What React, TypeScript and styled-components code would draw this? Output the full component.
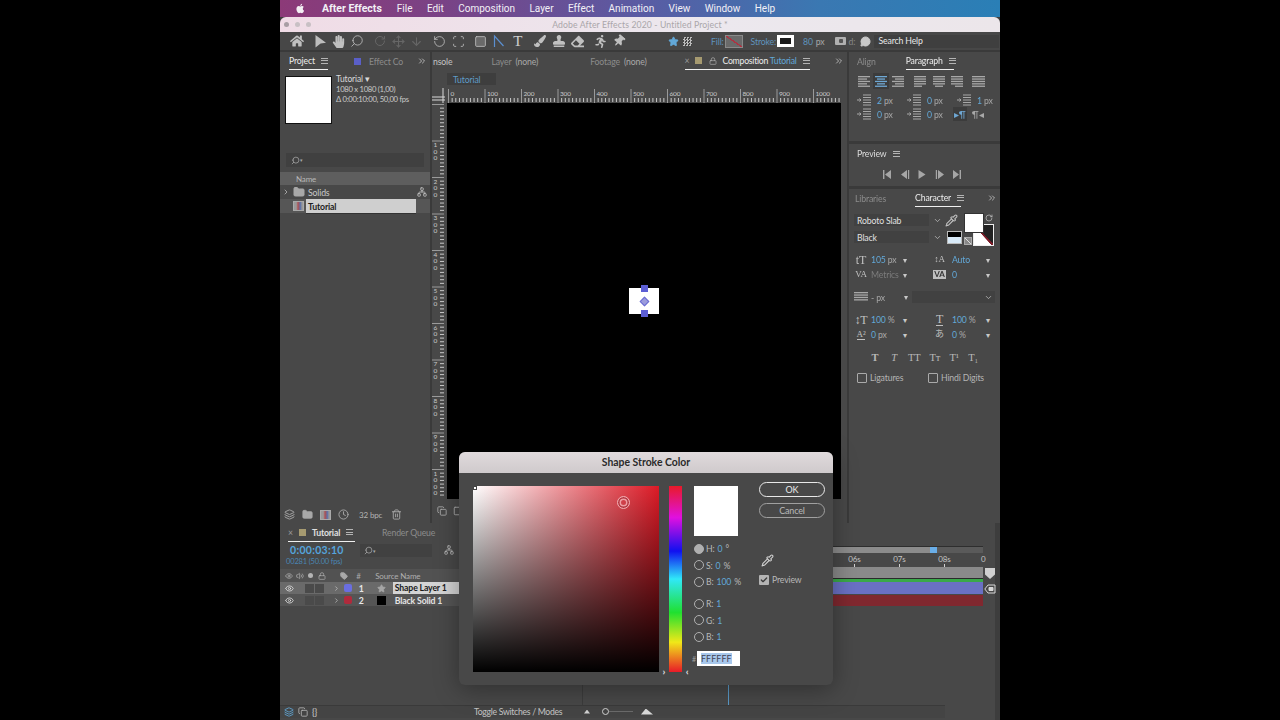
import React from 'react';
import styled, { createGlobalStyle } from 'styled-components';
import {
  Pipette,
  Search,
  Square,
  Star,
  Trash2,
  Folder,
  Eye,
  Lock,
  Tag,
  Volume2,
  Move,
  ArrowDown,
  RotateCcw,
  RotateCw,
  Scan,
  MessageCircle,
  Check,
  ChevronRight,
  ChevronDown,
  ChevronsRight,
  Network,
  Clock,
  Layers,
  Copy,
} from 'lucide-react';
import {
  FaEraser,
  FaHandPaper,
  FaHome,
  FaPaintBrush,
  FaRunning,
  FaStamp,
  FaThumbtack,
} from 'react-icons/fa';

const GlobalStyle = createGlobalStyle`
  html, body { margin: 0; padding: 0; background: #000; height: 100%; }
  * { box-sizing: border-box; }
`;

const BLUE = '#62a8d8';
const TEXT = '#c4c4c4';
const DIM = '#8c8c8c';

const Burger = () => <S.Burger />;

const Caret = () => <S.Caret>▾</S.Caret>;

const Lines = ({ rows }: { rows: [number, number][] }) => (
  <svg width="14" height="12" viewBox="0 0 14 12">
    {rows.map(([x, w], i) => (
      <rect key={i} x={x} y={1 + i * 2.4} width={w} height="1.3" fill="#a8a8a8" />
    ))}
  </svg>
);

const IndentIcon = () => (
  <svg width="14" height="12" viewBox="0 0 14 12">
    <path d="M6 1h8M6 3.5h8M6 6h8M6 8.5h8M6 11h8" stroke="#a8a8a8" strokeWidth="1.1" />
    <path d="M0 6h3.5M2.5 4.5L4 6 2.5 7.5" stroke="#a8a8a8" fill="none" />
  </svg>
);

const Transport = ({ kind }: { kind: string }) => (
  <svg width="10" height="9" viewBox="0 0 10 9" fill="#a6a6a6">
    {kind === 'first' && <path d="M1 0h1.4v9H1zM9 0v9L3 4.5z" />}
    {kind === 'prev' && <path d="M8 0h1.2v9H8zM7 0v9L1 4.5z" />}
    {kind === 'play' && <path d="M1.5 0v9l7-4.5z" />}
    {kind === 'next' && <path d="M.8 0H2v9H.8zM3 0v9l6-4.5z" />}
    {kind === 'last' && <path d="M7.6 0H9v9H7.6zM1 0v9l6-4.5z" />}
  </svg>
);

const TopRuler = () => {
  const ticks = [];
  for (let i = 0; i < 108; i++) {
    const x = 16 + i * 3.65;
    ticks.push(<rect key={i} x={x} y={i % 10 === 0 ? 1 : 10} width="1" height={i % 10 === 0 ? 14 : 4} fill={i % 10 === 0 ? '#9a9a9a' : '#c9c9c9'} />);
  }
  return (
    <svg width="412" height="15" viewBox="0 0 412 15">
      <path d="M0 9h13M0 12h13M11 0v15" stroke="#d8d8d8" strokeWidth="1" />
      {ticks}
      {[0, 100, 200, 300, 400, 500, 600, 700, 800, 900, 1000].map((n, i) => (
        <text key={n} x={18.5 + i * 36.5} y="7.5" fontSize="6.5" fontFamily="Lato" fill="#c8c8c8">
          {n}
        </text>
      ))}
    </svg>
  );
};

const SideRuler = () => {
  const ticks = [];
  for (let i = 0; i < 108; i++) {
    const y = 1 + i * 3.65;
    ticks.push(<rect key={i} x={i % 10 === 0 ? 0 : 8} y={y} width={i % 10 === 0 ? 12 : 4} height="1" fill={i % 10 === 0 ? '#9a9a9a' : '#c9c9c9'} />);
  }
  return (
    <svg width="12" height="396" viewBox="0 0 12 396">
      {ticks}
      {[100, 200, 300, 400, 500, 600, 700, 800, 900, 1000].map((n, i) =>
        String(n)
          .split('')
          .map((d, j) => (
            <text key={`${n}-${j}`} x="1.5" y={44 + i * 36.5 + j * 6.5} fontSize="6.5" fontFamily="Lato" fill="#c8c8c8">
              {d}
            </text>
          ))
      )}
    </svg>
  );
};

const CharCell = ({ icon, value, unit, dim }: { icon: React.ReactNode; value: string; unit?: string; dim?: boolean }) => (
  <S.CharCell>
    <S.CharIcon>{icon}</S.CharIcon>
    <S.CharValue $dim={dim}>
      {value} {unit && <S.Unit>{unit}</S.Unit>}
    </S.CharValue>
    <Caret />
  </S.CharCell>
);

const ColorField = ({ label, value, unit, on }: { label: string; value: string; unit?: string; on?: boolean }) => (
  <S.FieldRow>
    <S.Radio $on={on} />
    <S.FieldLabel>{label}:</S.FieldLabel>
    <S.FieldValue>{value}</S.FieldValue>
    {unit && <S.FieldUnit>{unit}</S.FieldUnit>}
  </S.FieldRow>
);

export default function App() {
  return (
    <S.Page>
      <GlobalStyle />
      <S.Window>
        <S.MenuBar>
          <S.Apple viewBox="0 0 24 24">
            <path d="M17.05 12.54c-.03-2.6 2.12-3.85 2.22-3.91-1.21-1.77-3.09-2.01-3.76-2.04-1.6-.16-3.12.94-3.93.94-.81 0-2.06-.92-3.39-.89-1.74.03-3.35 1.01-4.25 2.57-1.81 3.14-.46 7.8 1.3 10.35.86 1.25 1.89 2.65 3.24 2.6 1.3-.05 1.79-.84 3.36-.84 1.57 0 2.01.84 3.39.81 1.4-.03 2.28-1.27 3.14-2.53.99-1.45 1.4-2.85 1.42-2.93-.03-.01-2.72-1.04-2.74-4.13zM14.47 4.9c.72-.87 1.2-2.08 1.07-3.28-1.03.04-2.28.69-3.02 1.55-.66.77-1.24 2-1.09 3.18 1.15.09 2.32-.58 3.04-1.45z" fill="#f4f0f4" />
          </S.Apple>
          <S.MenuItem $bold>After Effects</S.MenuItem>
          <S.MenuItem>File</S.MenuItem>
          <S.MenuItem>Edit</S.MenuItem>
          <S.MenuItem>Composition</S.MenuItem>
          <S.MenuItem>Layer</S.MenuItem>
          <S.MenuItem>Effect</S.MenuItem>
          <S.MenuItem>Animation</S.MenuItem>
          <S.MenuItem>View</S.MenuItem>
          <S.MenuItem>Window</S.MenuItem>
          <S.MenuItem>Help</S.MenuItem>
        </S.MenuBar>

        <S.TitleBar>
          <S.Lights>
            <S.Light $dark />
            <S.Light />
            <S.Light />
          </S.Lights>
          <S.TitleText>Adobe After Effects 2020 - Untitled Project *</S.TitleText>
        </S.TitleBar>

        <S.ToolBar>
          <S.ToolGroup>
            <S.Tool><FaHome size={14} /></S.Tool>
          </S.ToolGroup>
          <S.ToolGroup>
            <S.Tool>
              <svg width="14" height="14" viewBox="0 0 14 14" fill="#bdbdbd">
                <path d="M2.5 1L13 8.8 7.6 9.4 2.5 13.5z" />
              </svg>
            </S.Tool>
            <S.Tool><FaHandPaper size={13} /></S.Tool>
            <S.Tool><S.MirrorSearch size={14} strokeWidth={1.4} /></S.Tool>
          </S.ToolGroup>
          <S.ToolGroup>
            <S.Tool $off><RotateCw size={12} strokeWidth={2} /></S.Tool>
            <S.Tool $off><Move size={13} strokeWidth={2} /></S.Tool>
            <S.Tool $off><ArrowDown size={13} strokeWidth={2} /></S.Tool>
          </S.ToolGroup>
          <S.ToolGroup>
            <S.Tool><RotateCcw size={13} strokeWidth={1.5} /></S.Tool>
            <S.Tool><Scan size={13} strokeWidth={1.5} /></S.Tool>
          </S.ToolGroup>
          <S.ToolGroup>
            <S.Tool><Square size={13} fill="#6a6a6a" strokeWidth={1.5} /></S.Tool>
            <S.Tool $blue>
              <svg width="14" height="14" viewBox="0 0 14 14" fill="none" stroke="#5b8fd0" strokeWidth="1.2">
                <path d="M2.5 13V2l9 10" />
              </svg>
            </S.Tool>
            <S.Tool><S.TypeGlyph>T</S.TypeGlyph></S.Tool>
          </S.ToolGroup>
          <S.ToolGroup>
            <S.Tool><FaPaintBrush size={12} /></S.Tool>
            <S.Tool><FaStamp size={12} /></S.Tool>
            <S.Tool><FaEraser size={13} /></S.Tool>
          </S.ToolGroup>
          <S.ToolGroup>
            <S.Tool><FaRunning size={13} /></S.Tool>
            <S.Tool><S.TiltPin><FaThumbtack size={12} /></S.TiltPin></S.Tool>
          </S.ToolGroup>

          <S.ToolOptions>
            <Star size={11} fill={BLUE} color={BLUE} />
            <S.SnapBox />
            <S.OptLabel $ml={19}>Fill:</S.OptLabel>
            <S.FillSwatch />
            <S.OptLabel $ml={8}>Stroke:</S.OptLabel>
            <S.StrokeSwatch />
            <S.OptValue>80</S.OptValue>
            <S.OptUnit>px</S.OptUnit>
            <S.AddChip />
            <S.AddLabel>d:</S.AddLabel>
            <MessageCircle size={11} fill="#c8c8c8" color="#c8c8c8" />
            <S.HelpField>Search Help</S.HelpField>
          </S.ToolOptions>
        </S.ToolBar>

        <S.Workspace>
          <S.ProjectPanel>
            <S.TabRow>
              <S.Tab $active $ml={9} $w={39}>Project <Burger /></S.Tab>
              <S.Swatch $color="#5a5fc8" $ml={26} />
              <S.Tab $dim $ml={8}>Effect Co</S.Tab>
              <S.More><ChevronsRight size={10} /></S.More>
            </S.TabRow>
            <S.ProjectInfo>
              <S.Thumb />
              <S.InfoText>
                <S.InfoTitle>Tutorial ▾</S.InfoTitle>
                <span>1080 x 1080 (1,00)</span>
                <span>Δ 0:00:10:00, 50,00 fps</span>
              </S.InfoText>
            </S.ProjectInfo>
            <S.SearchField>
              <S.MirrorSearch size={9} color="#a8a8a8" />
              <S.TinyCaret>▾</S.TinyCaret>
            </S.SearchField>
            <S.NameHeader>Name</S.NameHeader>
            <S.ProjectRow>
              <ChevronRight size={8} color="#cfcfcf" />
              <Folder size={12} fill="#a8a8a8" color="#a8a8a8" />
              <S.ProjectName>Solids</S.ProjectName>
              <S.FlowIcon><Network size={10} color="#c0c0c0" /></S.FlowIcon>
            </S.ProjectRow>
            <S.ProjectRow $sel>
              <S.RowSpacer />
              <S.CompIcon />
              <S.SelectedName>Tutorial</S.SelectedName>
            </S.ProjectRow>
            <S.PanelFooter>
              <Layers size={11} />
              <Folder size={11} fill="#a8a8a8" />
              <S.CompIcon />
              <Clock size={11} />
              <S.Bpc>32 bpc</S.Bpc>
              <Trash2 size={11} />
            </S.PanelFooter>
          </S.ProjectPanel>

          <S.CompPanel>
            <S.TabRow>
              <S.Tab $ml={1}>nsole</S.Tab>
              <S.Tab $dim $ml={39}>Layer <S.Normal>(none)</S.Normal></S.Tab>
              <S.Tab $dim $ml={52}>Footage <S.Normal>(none)</S.Normal></S.Tab>
              <S.Tab $active $ml={38} $w={125}>
                <S.Close>×</S.Close>
                <S.Swatch $color="#a69a70" />
                <S.LockSlot><Lock size={8} /></S.LockSlot>
                <S.CompTitle>Composition <S.BlueText>Tutorial</S.BlueText></S.CompTitle>
                <Burger />
              </S.Tab>
              <S.More><ChevronsRight size={10} /></S.More>
            </S.TabRow>
            <S.SubTabs>
              <S.SubTab>Tutorial</S.SubTab>
            </S.SubTabs>
            <S.RulerTop>
              <TopRuler />
            </S.RulerTop>
            <S.ViewerRow>
              <S.RulerSide>
                <SideRuler />
              </S.RulerSide>
              <S.Canvas>
                <S.ShapeLayer>
                  <S.Handle $pos="top" />
                  <S.Anchor />
                  <S.Handle $pos="bottom" />
                </S.ShapeLayer>
              </S.Canvas>
            </S.ViewerRow>
            <S.ViewerFooter>
              <Copy size={10} />
              <Square size={10} />
            </S.ViewerFooter>
          </S.CompPanel>

          <S.SideColumn>
            <S.ParagraphPanel>
              <S.TabRow>
                <S.Tab $dim $ml={8}>Align</S.Tab>
                <S.Tab $active $ml={30} $w={48}>Paragraph <Burger /></S.Tab>
              </S.TabRow>
              <S.AlignRow>
                <S.AlignBtn><Lines rows={[[0, 12], [0, 9], [0, 12], [0, 9], [0, 12]]} /></S.AlignBtn>
                <S.AlignBtn $on><Lines rows={[[1, 12], [3, 8], [1, 12], [3, 8], [1, 12]]} /></S.AlignBtn>
                <S.AlignBtn><Lines rows={[[2, 12], [5, 9], [2, 12], [5, 9], [2, 12]]} /></S.AlignBtn>
                <S.AlignGap $w={6} />
                <S.AlignBtn $w={18.5}><Lines rows={[[1, 12], [1, 12], [1, 12], [1, 12], [1, 8]]} /></S.AlignBtn>
                <S.AlignBtn $w={18.5}><Lines rows={[[1, 12], [1, 12], [1, 12], [1, 12], [3, 8]]} /></S.AlignBtn>
                <S.AlignBtn $w={18.5}><Lines rows={[[1, 12], [1, 12], [1, 12], [1, 12], [5, 8]]} /></S.AlignBtn>
                <S.AlignGap $w={3} />
                <S.AlignBtn><Lines rows={[[1, 13], [1, 13], [1, 13], [1, 13], [1, 13]]} /></S.AlignBtn>
              </S.AlignRow>
              <S.IndentGrid>
                <S.Indent><IndentIcon /><S.CharValue>2 <S.Unit>px</S.Unit></S.CharValue></S.Indent>
                <S.Indent><IndentIcon /><S.CharValue>0 <S.Unit>px</S.Unit></S.CharValue></S.Indent>
                <S.Indent><IndentIcon /><S.CharValue>1 <S.Unit>px</S.Unit></S.CharValue></S.Indent>
                <S.Indent><IndentIcon /><S.CharValue>0 <S.Unit>px</S.Unit></S.CharValue></S.Indent>
                <S.Indent><IndentIcon /><S.CharValue>0 <S.Unit>px</S.Unit></S.CharValue></S.Indent>
                <S.DirPair>
                  <S.DirBtn $on>▸¶</S.DirBtn>
                  <S.DirBtn>¶◂</S.DirBtn>
                </S.DirPair>
              </S.IndentGrid>
            </S.ParagraphPanel>

            <S.PreviewPanel>
              <S.PanelTitle>Preview <Burger /></S.PanelTitle>
              <S.TransportRow>
                <Transport kind="first" />
                <Transport kind="prev" />
                <Transport kind="play" />
                <Transport kind="next" />
                <Transport kind="last" />
              </S.TransportRow>
            </S.PreviewPanel>

            <S.CharacterPanel>
              <S.TabRow>
                <S.Tab $dim $ml={6}>Libraries</S.Tab>
                <S.Tab $active $ml={29} $w={46}>Character <Burger /></S.Tab>
                <S.More><ChevronsRight size={10} /></S.More>
              </S.TabRow>
              <S.FontBlock>
                <S.FontFields>
                  <S.FontRow>
                    <S.FontField>Roboto Slab</S.FontField>
                    <ChevronDown size={9} color="#c0c0c0" />
                    <Pipette size={13} color="#c0c0c0" />
                  </S.FontRow>
                  <S.FontRow>
                    <S.FontField>Black</S.FontField>
                    <ChevronDown size={9} color="#c0c0c0" />
                    <S.MiniSwatch />
                  </S.FontRow>
                </S.FontFields>
                <S.ColorStack>
                  <S.BackColor />
                  <S.FrontColor />
                  <S.SwapArrow><RotateCw size={8} color="#c8c8c8" /></S.SwapArrow>
                  <S.ResetChip />
                </S.ColorStack>
              </S.FontBlock>
              <S.CharGrid $mt={6}>
                <CharCell icon={<S.TGlyph>tT</S.TGlyph>} value="105" unit="px" />
                <CharCell icon={<S.TGlyph $small>↕A</S.TGlyph>} value="Auto" />
                <CharCell icon={<S.TGlyph $small>VA</S.TGlyph>} value="Metrics" dim />
                <CharCell icon={<S.KernGlyph>VA</S.KernGlyph>} value="0" />
              </S.CharGrid>
              <S.StrokeRow>
                <S.StrokeIcon><Lines rows={[[0, 14], [0, 14], [0, 14], [0, 14]]} /></S.StrokeIcon>
                <S.CharValue><S.Unit>- px</S.Unit></S.CharValue>
                <Caret />
                <S.StrokeSelect><ChevronDown size={9} color="#c0c0c0" /></S.StrokeSelect>
              </S.StrokeRow>
              <S.CharGrid $mt={8}>
                <CharCell icon={<S.TGlyph>↕T</S.TGlyph>} value="100" unit="%" />
                <CharCell icon={<S.TGlyph $under>T</S.TGlyph>} value="100" unit="%" />
                <CharCell icon={<S.TGlyph $small $under>A²</S.TGlyph>} value="0" unit="px" />
                <CharCell icon={<S.TGlyph $small>あ</S.TGlyph>} value="0" unit="%" />
              </S.CharGrid>
              <S.StyleRow>
                <S.StyleGlyph $bold>T</S.StyleGlyph>
                <S.StyleGlyph $italic>T</S.StyleGlyph>
                <S.StyleGlyph>TT</S.StyleGlyph>
                <S.StyleGlyph>Tт</S.StyleGlyph>
                <S.StyleGlyph>T¹</S.StyleGlyph>
                <S.StyleGlyph>T₁</S.StyleGlyph>
              </S.StyleRow>
              <S.CheckRow>
                <S.CheckItem><S.CheckBox />Ligatures</S.CheckItem>
                <S.CheckItem><S.CheckBox />Hindi Digits</S.CheckItem>
              </S.CheckRow>
            </S.CharacterPanel>
          </S.SideColumn>
        </S.Workspace>

        <S.Timeline>
          <S.TimelineTabs>
            <S.Tab $active $ml={8} $w={67}>
              <S.Close>×</S.Close>
              <S.Swatch $color="#a69a70" />
              <S.TabStrong>Tutorial</S.TabStrong>
              <Burger />
            </S.Tab>
            <S.Tab $dim $ml={27}>Render Queue</S.Tab>
          </S.TimelineTabs>
          <S.TimelineBody>
            <S.LayerPane>
              <S.TimeRow>
                <S.TimeBlock>
                  <S.TimeCode>0:00:03:10</S.TimeCode>
                  <S.TimeSub>00281 (50.00 fps)</S.TimeSub>
                </S.TimeBlock>
                <S.TimeSearch>
                  <S.MirrorSearch size={9} color="#a8a8a8" />
                  <S.TinyCaret>▾</S.TinyCaret>
                </S.TimeSearch>
                <S.TreeIcon><Network size={10} color="#b8b8b8" /></S.TreeIcon>
              </S.TimeRow>
              <S.LayerHeader>
                <S.SwitchCell><Eye size={8} /></S.SwitchCell>
                <S.SwitchCell><Volume2 size={8} /></S.SwitchCell>
                <S.SwitchCell><S.Dot /></S.SwitchCell>
                <S.SwitchCell><Lock size={8} /></S.SwitchCell>
                <S.HeaderTag><Tag size={8} fill="#a8a8a8" /></S.HeaderTag>
                <S.HeaderNum>#</S.HeaderNum>
                <S.HeaderName>Source Name</S.HeaderName>
              </S.LayerHeader>
              <S.LayerRow $sel>
                <S.SwitchCell><Eye size={9} color="#e4e4e4" /></S.SwitchCell>
                <S.SwitchGap />
                <S.DarkBox />
                <S.DarkBox />
                <S.Twirl><ChevronRight size={7} color="#d8d8d8" /></S.Twirl>
                <S.LabelChip $color="#6a6ee0" />
                <S.LayerNum>1</S.LayerNum>
                <S.SourceIcon><Star size={9} fill="#a6a6a6" color="#a6a6a6" /></S.SourceIcon>
                <S.LayerNameSel>Shape Layer 1</S.LayerNameSel>
              </S.LayerRow>
              <S.LayerRow>
                <S.SwitchCell><Eye size={9} color="#e4e4e4" /></S.SwitchCell>
                <S.SwitchGap />
                <S.DarkBox />
                <S.DarkBox />
                <S.Twirl><ChevronRight size={7} color="#d8d8d8" /></S.Twirl>
                <S.LabelChip $color="#b02a3c" />
                <S.LayerNum>2</S.LayerNum>
                <S.SourceIcon><S.BlackChip /></S.SourceIcon>
                <S.LayerName>Black Solid 1</S.LayerName>
              </S.LayerRow>
            </S.LayerPane>
            <S.TrackPane>
              <S.ScrollRow>
                <S.ScrollBar>
                  <S.ScrollThumb />
                </S.ScrollBar>
              </S.ScrollRow>
              <S.TimeLabels>
                <S.TimeLabel>06s</S.TimeLabel>
                <S.TimeLabel>07s</S.TimeLabel>
                <S.TimeLabel>08s</S.TimeLabel>
                <S.TimeLabelEdge>0</S.TimeLabelEdge>
              </S.TimeLabels>
              <S.WorkArea />
              <S.GreenLine />
              <S.TrackBar $color="#6a70c4" />
              <S.TrackBar $color="#80282f" />
              <S.Playhead />
            </S.TrackPane>
            <S.SideMarks>
              <S.ShieldMark />
              <svg width="12" height="10" viewBox="0 0 12 10" fill="none" stroke="#d8d8d8">
                <path d="M4 1L.8 5 4 9h7V1z" />
                <path d="M5 3.5h4v3H5z" fill="#d8d8d8" />
              </svg>
            </S.SideMarks>
          </S.TimelineBody>
          <S.TimelineFooter>
            <S.FooterIcons>
              <Layers size={10} color={BLUE} />
              <Copy size={10} />
              <S.Brackets>{'{}'}</S.Brackets>
            </S.FooterIcons>
            <S.ToggleLabel>Toggle Switches / Modes</S.ToggleLabel>
            <S.ZoomSlider>
              <S.SmallPeak />
              <S.SliderKnob />
              <S.SliderLine />
              <S.BigPeak />
            </S.ZoomSlider>
          </S.TimelineFooter>
        </S.Timeline>

        <S.Dialog>
          <S.DialogTitle>Shape Stroke Color</S.DialogTitle>
          <S.DialogBody>
            <S.Picker>
              <S.PickerCorner />
              <S.PickerRing />
            </S.Picker>
            <S.HueColumn>
              <S.HueBar />
              <S.HueArrows>
                <span>›</span>
                <span>‹</span>
              </S.HueArrows>
            </S.HueColumn>
            <S.ValueColumn>
              <S.NewColor />
              <S.FieldGroup $mt={6}>
                <ColorField label="H" value="0" unit="°" on />
                <ColorField label="S" value="0" unit="%" />
                <ColorField label="B" value="100" unit="%" />
              </S.FieldGroup>
              <S.FieldGroup $mt={7}>
                <ColorField label="R" value="1" />
                <ColorField label="G" value="1" />
                <ColorField label="B" value="1" />
              </S.FieldGroup>
              <S.HexRow>
                <S.Hash>#</S.Hash>
                <S.HexInput>
                  <S.HexSel>FFFFFF</S.HexSel>
                </S.HexInput>
              </S.HexRow>
            </S.ValueColumn>
            <S.ButtonColumn>
              <S.PrimaryBtn>OK</S.PrimaryBtn>
              <S.SecondaryBtn>Cancel</S.SecondaryBtn>
              <S.DropperSlot>
                <Pipette size={13} color="#d0d0d0" />
              </S.DropperSlot>
              <S.PreviewCheck>
                <S.PreviewBox><Check size={8} color="#3c3c3c" strokeWidth={4} /></S.PreviewBox>
                Preview
              </S.PreviewCheck>
            </S.ButtonColumn>
          </S.DialogBody>
        </S.Dialog>
      </S.Window>
    </S.Page>
  );
}

const S = {
  Page: styled.div`
    width: 1280px;
    height: 720px;
    background: #000;
    display: flex;
    justify-content: center;
    overflow: hidden;
  `,
  Window: styled.div`
    position: relative;
    width: 720px;
    height: 720px;
    display: flex;
    flex-direction: column;
    background: #3d3d3d;
    font-family: 'Lato', 'Liberation Sans', sans-serif;
    font-size: 8.7px;
    letter-spacing: -0.15px;
    color: ${TEXT};
    filter: blur(0.35px);
  `,
  MenuBar: styled.div`
    height: 17px;
    display: flex;
    align-items: center;
    padding-left: 15px;
    background: linear-gradient(90deg, #8c3a78 0%, #7a4285 22%, #5a5ba3 50%, #3a78b2 75%, #2a7fb6 100%);
    font-family: 'Roboto', 'Liberation Sans', sans-serif;
    letter-spacing: 0;
    font-size: 10px;
    color: #f2f0f6;
  `,
  Apple: styled.svg`
    width: 11px;
    height: 11px;
    margin-right: 16px;
  `,
  MenuItem: styled.span<{ $bold?: boolean }>`
    margin-right: ${(p) => (p.$bold ? 15 : 14.4)}px;
    font-size: ${(p) => (p.$bold ? 10.5 : 10)}px;
    font-weight: ${(p) => (p.$bold ? 700 : 400)};
    white-space: nowrap;
  `,
  TitleBar: styled.div`
    position: relative;
    height: 15px;
    display: flex;
    align-items: center;
    justify-content: center;
    background: linear-gradient(90deg, #f0dce6, #ece8ee 60%, #ece6ea);
    border-radius: 6px 6px 0 0;
  `,
  Lights: styled.div`
    position: absolute;
    left: 4px;
    display: flex;
    gap: 6px;
  `,
  Light: styled.i<{ $dark?: boolean }>`
    width: 5px;
    height: 5px;
    border-radius: 50%;
    background: ${(p) => (p.$dark ? '#a89ea4' : '#c8c0c4')};
  `,
  TitleText: styled.span`
    font-size: 8.7px;
    color: #aaa6aa;
    letter-spacing: 0.1px;
  `,
  ToolBar: styled.div`
    height: 19px;
    display: flex;
    align-items: center;
    padding-left: 8px;
    gap: 4px;
    background: #474747;
    border-bottom: 1px solid #3a3a3a;
  `,
  ToolGroup: styled.div`
    display: flex;
  `,
  Tool: styled.div<{ $off?: boolean; $blue?: boolean }>`
    width: 18.6px;
    display: flex;
    justify-content: center;
    align-items: center;
    color: ${(p) => (p.$off ? '#666' : p.$blue ? '#5b8fd0' : '#c0c0c0')};
  `,
  MirrorSearch: styled(Search)`
    transform: scaleX(-1);
    flex: none;
  `,
  TiltPin: styled.span`
    display: flex;
    transform: rotate(40deg);
  `,
  TypeGlyph: styled.span`
    font-family: 'Liberation Serif', serif;
    font-size: 15px;
    line-height: 1;
    color: #d0d0d0;
  `,
  ToolOptions: styled.div`
    margin-left: 36px;
    display: flex;
    align-items: center;
    flex: 1;
    min-width: 0;
  `,
  SnapBox: styled.div`
    width: 9px;
    height: 9px;
    margin-left: 4px;
    background: repeating-conic-gradient(#bbb 0 25%, #444 0 50%) 0 0 / 3px 3px;
  `,
  OptLabel: styled.span<{ $ml: number }>`
    margin-left: ${(p) => p.$ml}px;
    color: #5f93bd;
  `,
  FillSwatch: styled.div`
    width: 18px;
    height: 13px;
    margin-left: 1px;
    border: 1px solid #8a8a8a;
    background: linear-gradient(to top right, #6a6a6a 46%, #b03040 47%, #b03040 53%, #6a6a6a 54%);
  `,
  StrokeSwatch: styled.div`
    width: 17px;
    height: 12px;
    margin-left: 1px;
    border: 3px solid #fff;
    background: #1a1a1a;
  `,
  OptValue: styled.span`
    margin-left: 9px;
    color: #5f93bd;
  `,
  OptUnit: styled.span`
    margin-left: 3px;
    color: #a8a8a8;
  `,
  AddChip: styled.i`
    width: 11px;
    height: 8px;
    margin-left: 10px;
    flex: none;
    border-radius: 1px;
    background: radial-gradient(circle at 55% 50%, #555 0 2px, #b0b0b0 2.5px);
  `,
  AddLabel: styled.span`
    width: 11px;
    margin-left: 3px;
    flex: none;
    color: #888;
  `,
  HelpField: styled.div`
    margin-left: 3px;
    width: 125px;
    flex: none;
    height: 13px;
    padding: 0 0 1px 5px;
    display: flex;
    align-items: center;
    background: #3f3f3f;
    color: #e8e8e8;
  `,
  Workspace: styled.div`
    height: 472px;
    display: grid;
    grid-template-columns: 150px 415px 151px;
    gap: 0 2px;
    padding-top: 1px;
    background: #3a3a3a;
  `,
  ProjectPanel: styled.section`
    position: relative;
    display: flex;
    flex-direction: column;
    background: #484848;
  `,
  TabRow: styled.div`
    position: relative;
    height: 18px;
    flex: none;
    display: flex;
    align-items: center;
  `,
  Tab: styled.div<{ $active?: boolean; $dim?: boolean; $ml?: number; $w?: number }>`
    height: 18px;
    margin-left: ${(p) => p.$ml ?? 0}px;
    width: ${(p) => (p.$w ? `${p.$w}px` : 'auto')};
    display: flex;
    align-items: center;
    gap: 4px;
    white-space: nowrap;
    color: ${(p) => (p.$active ? '#ececec' : p.$dim ? DIM : TEXT)};
    border-bottom: ${(p) => (p.$active ? '1.5px solid #f0f0f0' : 'none')};
    svg { color: #b0b0b0; flex: none; }
  `,
  Normal: styled.span`
    color: #a8a8a8;
  `,
  Burger: styled.i`
    width: 7px;
    height: 6px;
    flex: none;
    margin-left: 2px;
    border-top: 1px solid #b4b4b4;
    border-bottom: 1px solid #b4b4b4;
    background: linear-gradient(#b4b4b4, #b4b4b4) center / 100% 1px no-repeat;
    display: inline-block;
  `,
  Swatch: styled.i<{ $color: string; $ml?: number }>`
    width: 7px;
    height: 7px;
    flex: none;
    margin-left: ${(p) => p.$ml ?? 0}px;
    background: ${(p) => p.$color};
  `,
  More: styled.div`
    position: absolute;
    right: 3px;
    top: 4px;
    color: #c4c4c4;
  `,
  Close: styled.span`
    color: #9a9a9a;
    margin-right: 2px;
  `,
  LockSlot: styled.span`
    display: flex;
    margin-left: 3px;
  `,
  CompTitle: styled.span`
    margin-left: 1px;
    letter-spacing: -0.25px;
    color: #ececec;
  `,
  BlueText: styled.span`
    color: ${BLUE};
  `,
  ProjectInfo: styled.div`
    margin: 6px 0 0 5px;
    height: 48px;
    display: flex;
    gap: 4px;
  `,
  Thumb: styled.div`
    width: 47px;
    height: 48px;
    background: #fff;
    border: 1px solid #111;
  `,
  InfoText: styled.div`
    display: flex;
    flex-direction: column;
    margin-top: -2px;
    line-height: 10px;
    font-size: 7.7px;
    letter-spacing: -0.3px;
    color: #c8c8c8;
  `,
  InfoTitle: styled.span`
    font-size: 8.5px;
    letter-spacing: -0.15px;
    color: #d8d8d8;
  `,
  SearchField: styled.div`
    margin: 29px 6px 0;
    height: 14px;
    padding-left: 5px;
    display: flex;
    align-items: center;
    background: #404040;
  `,
  TinyCaret: styled.span`
    font-size: 5px;
    color: #a8a8a8;
  `,
  NameHeader: styled.div`
    margin-top: 5px;
    height: 13px;
    padding-left: 16px;
    display: flex;
    align-items: center;
    background: #5e5e5e;
    font-size: 8px;
    color: #b8b8b8;
  `,
  ProjectRow: styled.div<{ $sel?: boolean }>`
    position: relative;
    height: 14px;
    padding-left: 2px;
    display: flex;
    align-items: center;
    gap: 3px;
    background: ${(p) => (p.$sel ? '#565656' : 'transparent')};
  `,
  RowSpacer: styled.i`
    width: 8px;
  `,
  ProjectName: styled.span`
    color: #c8c8c8;
  `,
  FlowIcon: styled.span`
    margin-left: auto;
    margin-right: 3px;
    display: flex;
  `,
  CompIcon: styled.i`
    width: 11px;
    height: 10px;
    flex: none;
    background: linear-gradient(90deg, #999 25%, #b05050 45%, #5a70a8 70%, #999 90%);
    border: 1px solid #aaa;
  `,
  SelectedName: styled.span`
    margin-left: -1px;
    width: 110px;
    height: 14px;
    padding-left: 2px;
    display: flex;
    align-items: center;
    background: #cfcfcf;
    color: #1c1c1c;
    font-weight: 700;
    box-shadow: 0 1px 0 #333;
  `,
  PanelFooter: styled.div`
    margin-top: auto;
    height: 20px;
    padding: 3px 0 0 4px;
    display: flex;
    align-items: center;
    gap: 7px;
    color: #a8a8a8;
    flex: none;
  `,
  Bpc: styled.span`
    margin: 0 2px 0 3px;
    font-size: 8px;
    color: #b4b4b4;
  `,
  CompPanel: styled.section`
    display: flex;
    flex-direction: column;
    background: #484848;
    min-width: 0;
  `,
  SubTabs: styled.div`
    height: 17px;
    padding: 3px 0 0 15px;
    flex: none;
  `,
  SubTab: styled.div`
    width: 49px;
    height: 12px;
    padding-left: 6px;
    display: flex;
    align-items: center;
    background: #3e3e3e;
    color: #5f9cc8;
  `,
  RulerTop: styled.div`
    height: 15px;
    flex: none;
    margin-top: 1px;
    display: flex;
  `,
  ViewerRow: styled.div`
    height: 396px;
    flex: none;
    display: flex;
    gap: 3px;
  `,
  RulerSide: styled.div`
    width: 12px;
    flex: none;
  `,
  Canvas: styled.div`
    width: 394px;
    height: 396px;
    display: flex;
    align-items: center;
    justify-content: center;
    background: #000;
  `,
  ShapeLayer: styled.div`
    position: relative;
    width: 30px;
    height: 26px;
    display: flex;
    align-items: center;
    justify-content: center;
    background: #fff;
  `,
  Handle: styled.i<{ $pos: 'top' | 'bottom' }>`
    position: absolute;
    left: 12px;
    ${(p) => (p.$pos === 'top' ? 'top: -3px;' : 'bottom: -3px;')}
    width: 7px;
    height: 7px;
    background: #5c5ed4;
  `,
  Anchor: styled.i`
    width: 7px;
    height: 7px;
    transform: rotate(45deg);
    background: #9c9cdc;
    border: 1px solid #6a6cd4;
  `,
  ViewerFooter: styled.div`
    flex: 1;
    padding-left: 5px;
    display: flex;
    align-items: center;
    gap: 6px;
    color: #b0b0b0;
  `,
  SideColumn: styled.div`
    display: flex;
    flex-direction: column;
    gap: 3px;
  `,
  ParagraphPanel: styled.section`
    height: 89px;
    background: #484848;
    flex: none;
  `,
  AlignRow: styled.div`
    margin-top: 3px;
    height: 16px;
    padding-left: 8px;
    display: flex;
    align-items: center;
  `,
  AlignBtn: styled.div<{ $on?: boolean; $w?: number }>`
    width: ${(p) => p.$w ?? 16}px;
    height: 16px;
    display: flex;
    align-items: center;
    justify-content: center;
    background: ${(p) => (p.$on ? '#3c3c3c' : 'transparent')};
    svg rect { fill: ${(p) => (p.$on ? '#6fa8d4' : '#a8a8a8')}; }
  `,
  AlignGap: styled.i<{ $w: number }>`
    width: ${(p) => p.$w}px;
  `,
  IndentGrid: styled.div`
    margin-top: 4px;
    padding-left: 8px;
    display: grid;
    grid-template-columns: 50px 50px 50px;
    grid-auto-rows: 14px;
    align-items: center;
  `,
  Indent: styled.div`
    display: flex;
    align-items: center;
    gap: 6px;
  `,
  DirPair: styled.div`
    display: flex;
    gap: 4px;
    font-size: 10px;
    margin-left: -4px;
  `,
  DirBtn: styled.span<{ $on?: boolean }>`
    padding: 1px;
    color: ${(p) => (p.$on ? '#6fa8d4' : '#a8a8a8')};
    background: ${(p) => (p.$on ? '#3c3c3c' : 'transparent')};
    white-space: nowrap;
  `,
  PreviewPanel: styled.section`
    height: 42px;
    flex: none;
    padding: 4px 0 0 8px;
    background: #484848;
  `,
  PanelTitle: styled.div`
    height: 11px;
    display: flex;
    align-items: center;
    gap: 4px;
    color: #dcdcdc;
  `,
  TransportRow: styled.div`
    margin: 11px 0 0 25px;
    display: flex;
    gap: 7.6px;
  `,
  CharacterPanel: styled.section`
    flex: 1;
    background: #484848;
  `,
  FontBlock: styled.div`
    margin-top: 7px;
    padding-left: 5px;
    display: flex;
  `,
  FontFields: styled.div`
    width: 110px;
    display: flex;
    flex-direction: column;
    gap: 5px;
  `,
  FontRow: styled.div`
    height: 12px;
    display: flex;
    align-items: center;
    gap: 3px;
  `,
  FontField: styled.div`
    width: 75px;
    height: 12px;
    padding-left: 3px;
    display: flex;
    align-items: center;
    background: #414141;
    color: #e0e0e0;
    margin-right: 1px;
  `,
  MiniSwatch: styled.i`
    width: 15px;
    height: 13px;
    margin-left: 2px;
    border: 1px solid #bbb;
    background: linear-gradient(#000 50%, #d8eaf8 50%);
  `,
  ColorStack: styled.div`
    position: relative;
    width: 32px;
    height: 33px;
    margin-top: -1px;
  `,
  BackColor: styled.div`
    position: absolute;
    right: 2px;
    bottom: 0;
    width: 21px;
    height: 22px;
    border: 1px solid #eee;
    background: linear-gradient(to top right, #fff 46%, #7a1c28 47%, #7a1c28 53%, #222 54%);
  `,
  FrontColor: styled.div`
    position: absolute;
    left: 0;
    top: 0;
    width: 20px;
    height: 20px;
    background: #fff;
    border: 1px solid #333;
  `,
  SwapArrow: styled.span`
    position: absolute;
    right: 3px;
    top: 1px;
    display: flex;
  `,
  ResetChip: styled.i`
    position: absolute;
    left: 0;
    bottom: 1px;
    width: 8px;
    height: 8px;
    background: linear-gradient(to top right, #888 46%, #ddd 47%, #ddd 53%, #888 54%);
    border: 1px solid #aaa;
  `,
  CharGrid: styled.div<{ $mt: number }>`
    margin-top: ${(p) => p.$mt}px;
    padding-left: 2px;
    display: grid;
    grid-template-columns: 76px 70px;
    grid-auto-rows: 15px;
    align-items: center;
  `,
  CharCell: styled.div`
    display: flex;
    align-items: center;
    justify-content: flex-start;
    & > span:last-child { margin-right: 20px; }
    &:nth-child(even) > span:first-child { width: 25px; }
    &:nth-child(even) > span:last-child { margin-right: 7px; }
  `,
  CharIcon: styled.span`
    width: 20px;
    flex: none;
    display: flex;
    justify-content: center;
  `,
  CharValue: styled.span<{ $dim?: boolean }>`
    flex: 1;
    color: ${(p) => (p.$dim ? '#7c7c7c' : BLUE)};
    white-space: nowrap;
  `,
  Unit: styled.span`
    color: #a8a8a8;
  `,
  Caret: styled.span`
    flex: none;
    margin-right: 4px;
    font-size: 8px;
    color: #c8c8c8;
  `,
  TGlyph: styled.span<{ $small?: boolean; $under?: boolean }>`
    font-family: 'Liberation Serif', 'Noto Sans CJK JP', serif;
    font-size: ${(p) => (p.$small ? 9 : 12)}px;
    line-height: 1;
    color: #c0c0c0;
    white-space: nowrap;
    border-bottom: ${(p) => (p.$under ? '1px solid #c0c0c0' : 'none')};
  `,
  KernGlyph: styled.span`
    padding: 0 1px;
    background: #c0c0c0;
    color: #333;
    font-size: 8px;
    line-height: 9px;
    font-weight: 700;
  `,
  StrokeRow: styled.div`
    margin-top: 8px;
    padding-left: 5px;
    height: 14px;
    display: flex;
    align-items: center;
  `,
  StrokeIcon: styled.span`
    width: 17px;
    flex: none;
    display: flex;
  `,
  StrokeSelect: styled.div`
    width: 83px;
    height: 12px;
    padding-right: 2px;
    display: flex;
    align-items: center;
    justify-content: flex-end;
    background: #414141;
    flex: none;
    margin-right: 5px;
  `,
  StyleRow: styled.div`
    margin-top: 8px;
    padding-left: 21px;
    height: 14px;
    display: flex;
    align-items: center;
    gap: 9px;
  `,
  StyleGlyph: styled.span<{ $bold?: boolean; $italic?: boolean }>`
    min-width: 10px;
    text-align: center;
    font-family: 'Liberation Serif', serif;
    font-size: 10.5px;
    font-weight: ${(p) => (p.$bold ? 700 : 400)};
    font-style: ${(p) => (p.$italic ? 'italic' : 'normal')};
    color: #b8b8b8;
  `,
  CheckRow: styled.div`
    margin-top: 8px;
    padding-left: 8px;
    display: grid;
    grid-template-columns: 71px 1fr;
  `,
  CheckItem: styled.label`
    display: flex;
    align-items: center;
    gap: 3px;
    color: #b4b4b4;
  `,
  CheckBox: styled.i`
    width: 10px;
    height: 10px;
    border: 1px solid #aaa;
    border-radius: 1px;
  `,
  Timeline: styled.section`
    height: 197px;
    width: 715px;
    display: flex;
    flex-direction: column;
    background: #484848;
  `,
  TimelineTabs: styled.div`
    height: 19px;
    flex: none;
    display: flex;
    align-items: center;
  `,
  TabStrong: styled.span`
    margin-left: 2px;
    font-weight: 700;
    color: #e0e0e0;
  `,
  TimelineBody: styled.div`
    flex: 1;
    display: flex;
    min-height: 0;
  `,
  LayerPane: styled.div`
    width: 303px;
    flex: none;
  `,
  TimeRow: styled.div`
    height: 27px;
    padding-left: 10px;
    display: flex;
  `,
  TimeBlock: styled.div`
    width: 70px;
    flex: none;
    display: flex;
    flex-direction: column;
    padding-top: 2px;
  `,
  TimeCode: styled.span`
    font-size: 10.5px;
    line-height: 13px;
    font-weight: 700;
    color: #55a4dc;
    letter-spacing: 0.3px;
  `,
  TimeSub: styled.span`
    font-size: 7.5px;
    color: #4a86b4;
    margin-left: -4px;
    white-space: nowrap;
  `,
  TimeSearch: styled.div`
    width: 72px;
    height: 13px;
    margin-top: 2px;
    padding-left: 4px;
    display: flex;
    align-items: center;
    background: #414141;
  `,
  TreeIcon: styled.div`
    margin: 3px 0 0 12px;
  `,
  LayerHeader: styled.div`
    height: 13px;
    padding-left: 4px;
    display: flex;
    align-items: center;
    background: #525252;
    color: #a8a8a8;
    font-size: 8px;
    svg { color: #b4b4b4; }
  `,
  SwitchCell: styled.span`
    width: 10.8px;
    flex: none;
    display: flex;
    justify-content: center;
    align-items: center;
  `,
  Dot: styled.i`
    width: 5px;
    height: 5px;
    border-radius: 50%;
    background: #b4b4b4;
  `,
  HeaderTag: styled.span`
    margin-left: 13px;
    width: 12px;
    display: flex;
  `,
  HeaderNum: styled.span`
    margin-left: 4px;
    width: 18px;
  `,
  HeaderName: styled.span`
    margin-left: 1px;
    color: #b0b0b0;
  `,
  LayerRow: styled.div<{ $sel?: boolean }>`
    height: 12px;
    padding-left: 4px;
    display: flex;
    align-items: center;
    background: ${(p) => (p.$sel ? '#6a6a6a' : '#555')};
  `,
  SwitchGap: styled.i`
    width: 10px;
    flex: none;
  `,
  DarkBox: styled.i`
    width: 9px;
    height: 9px;
    flex: none;
    margin-right: 1.5px;
    background: #4a4a4a;
  `,
  Twirl: styled.span`
    margin-left: 7px;
    width: 11px;
    flex: none;
    display: flex;
  `,
  LabelChip: styled.i<{ $color: string }>`
    width: 8px;
    height: 8px;
    border-radius: 2px;
    flex: none;
    background: ${(p) => p.$color};
  `,
  LayerNum: styled.span`
    margin-left: 7px;
    width: 12px;
    flex: none;
    font-weight: 700;
    color: #e8e8e8;
  `,
  SourceIcon: styled.span`
    margin-left: 6px;
    width: 17px;
    flex: none;
    display: flex;
  `,
  BlackChip: styled.i`
    width: 9px;
    height: 9px;
    background: #000;
  `,
  LayerNameSel: styled.span`
    width: 120px;
    height: 12px;
    padding-left: 2px;
    margin-left: -1px;
    background: #d4d4d4;
    color: #1a1a1a;
    font-weight: 700;
    line-height: 12px;
  `,
  LayerName: styled.span`
    padding-left: 1px;
    color: #e4e4e4;
    font-weight: 700;
  `,
  TrackPane: styled.div`
    position: relative;
    flex: 1;
    min-width: 0;
    display: flex;
    flex-direction: column;
    box-shadow: -1px 0 0 #3c3c3c;
  `,
  ScrollRow: styled.div`
    height: 13px;
    padding-top: 4px;
    flex: none;
  `,
  ScrollBar: styled.div`
    height: 7px;
    display: flex;
    background: #5a5a5a;
    border-top: 1px solid #2e2e2e;
  `,
  ScrollThumb: styled.i`
    width: 354px;
    background: linear-gradient(90deg, #8c8c8c 98%, #6aaee8 98%);
  `,
  TimeLabels: styled.div`
    height: 12px;
    flex: none;
    display: flex;
    justify-content: flex-end;
    align-items: flex-start;
    font-size: 8px;
    line-height: 9px;
    color: #c4c4c4;
  `,
  TimeLabel: styled.span`
    position: relative;
    width: 45px;
    height: 12px;
    text-align: center;
    &::after {
      content: '';
      position: absolute;
      left: 22px;
      bottom: 0;
      width: 1px;
      height: 3px;
      background: #d0d0d0;
    }
  `,
  TimeLabelEdge: styled.span`
    width: 16px;
    padding-left: 14px;
  `,
  WorkArea: styled.div`
    height: 11px;
    flex: none;
    background: #8a8a8a;
  `,
  GreenLine: styled.div`
    height: 4px;
    flex: none;
    background: #3aa84a;
    border-top: 1px solid #2a2a2a;
  `,
  TrackBar: styled.div<{ $color: string }>`
    height: 11.5px;
    flex: none;
    margin-bottom: 1px;
    background: ${(p) => p.$color};
  `,
  Playhead: styled.i`
    position: absolute;
    left: 145px;
    top: 8px;
    bottom: 0;
    width: 1px;
    background: #5a9ac8;
  `,
  SideMarks: styled.div`
    width: 10px;
    margin-left: 2px;
    flex: none;
    padding-top: 26px;
    display: flex;
    flex-direction: column;
    align-items: center;
    gap: 5px;
  `,
  ShieldMark: styled.i`
    width: 10px;
    height: 11px;
    background: #d0d0d0;
    clip-path: polygon(0 0, 100% 0, 100% 60%, 50% 100%, 0 60%);
  `,
  TimelineFooter: styled.div`
    height: 13px;
    width: 665px;
    flex: none;
    margin-bottom: 2px;
    padding: 0 0 1px 4px;
    display: flex;
    align-items: center;
    background: #444;
    border-top: 1px solid #3a3a3a;
    color: #b4b4b4;
  `,
  FooterIcons: styled.div`
    width: 190px;
    flex: none;
    display: flex;
    align-items: center;
    gap: 4px;
  `,
  Brackets: styled.span`
    font-size: 9px;
    font-weight: 700;
  `,
  ToggleLabel: styled.span`
    width: 110px;
    flex: none;
    white-space: nowrap;
    letter-spacing: -0.3px;
    color: #c4c4c4;
  `,
  ZoomSlider: styled.div`
    display: flex;
    align-items: center;
  `,
  SmallPeak: styled.i`
    width: 6px;
    height: 4px;
    background: #d0d0d0;
    clip-path: polygon(50% 0, 100% 100%, 0 100%);
  `,
  SliderKnob: styled.i`
    width: 7px;
    height: 7px;
    margin-left: 12px;
    border-radius: 50%;
    border: 1.5px solid #d0d0d0;
  `,
  SliderLine: styled.i`
    width: 24px;
    height: 1px;
    background: #6a6a6a;
  `,
  BigPeak: styled.i`
    width: 12px;
    height: 6px;
    margin-left: 8px;
    background: #d8d8d8;
    clip-path: polygon(40% 0, 100% 100%, 0 100%);
  `,
  Dialog: styled.div`
    position: absolute;
    left: 179px;
    top: 452px;
    width: 374px;
    height: 233px;
    display: flex;
    flex-direction: column;
    background: #484848;
    border-radius: 6px;
    overflow: hidden;
    box-shadow: 0 4px 24px rgba(0, 0, 0, 0.35);
  `,
  DialogTitle: styled.div`
    height: 21px;
    flex: none;
    padding-bottom: 1px;
    display: flex;
    align-items: center;
    justify-content: center;
    background: linear-gradient(#e0dadc, #cfcacc);
    color: #2a2a2a;
    font-size: 10.4px;
    letter-spacing: 0;
    font-weight: 700;
  `,
  DialogBody: styled.div`
    flex: 1;
    padding: 13px 0 0 14px;
    display: flex;
    align-items: flex-start;
  `,
  Picker: styled.div`
    position: relative;
    width: 186px;
    height: 186px;
    flex: none;
    background: linear-gradient(to top, #000, rgba(0, 0, 0, 0)), linear-gradient(to right, #fff, #dc1a26);
  `,
  PickerCorner: styled.i`
    position: absolute;
    left: 0;
    top: 0;
    width: 4px;
    height: 4px;
    background: #fff;
    border: 1px solid #444;
  `,
  PickerRing: styled.i`
    position: absolute;
    left: 144px;
    top: 10px;
    width: 13px;
    height: 13px;
    border-radius: 50%;
    border: 1.5px solid #f0b0b4;
    box-shadow: inset 0 0 0 1.5px rgba(170, 40, 50, 0.9), inset 0 0 0 3px rgba(245, 180, 185, 0.8);
  `,
  HueColumn: styled.div`
    margin-left: 6px;
    width: 21px;
    flex: none;
    display: flex;
    flex-direction: column;
    align-items: center;
  `,
  HueBar: styled.div`
    width: 13px;
    height: 186px;
    background: linear-gradient(#e81a28 0%, #e010e0 17%, #1010f0 35%, #30e8f8 50%, #20e030 68%, #f0e818 84%, #e81a28 100%);
  `,
  HueArrows: styled.div`
    width: 26px;
    margin-top: -6px;
    display: flex;
    justify-content: space-between;
    color: #e0e0e0;
    font-size: 10px;
    line-height: 10px;
    font-weight: 700;
  `,
  ValueColumn: styled.div`
    margin-left: 8px;
    width: 58px;
    flex: none;
  `,
  NewColor: styled.div`
    width: 44px;
    height: 50px;
    background: #fff;
  `,
  FieldGroup: styled.div<{ $mt: number }>`
    margin-top: ${(p) => p.$mt}px;
    padding-bottom: 2px;
    display: flex;
    flex-direction: column;
    gap: 3.5px;
  `,
  FieldRow: styled.div`
    height: 13px;
    display: flex;
    align-items: center;
    gap: 2px;
  `,
  Radio: styled.i<{ $on?: boolean }>`
    width: 10px;
    height: 10px;
    flex: none;
    border-radius: 50%;
    border: 1.5px solid #b0b0b0;
    background: ${(p) => (p.$on ? '#b0b0b0' : 'transparent')};
  `,
  FieldLabel: styled.span`
    color: #b8b8b8;
  `,
  FieldValue: styled.span`
    margin-left: 1px;
    color: ${BLUE};
  `,
  FieldUnit: styled.span`
    color: #b8b8b8;
    margin-left: 1px;
  `,
  HexRow: styled.div`
    margin-top: 6px;
    display: flex;
    align-items: center;
  `,
  Hash: styled.span`
    width: 4px;
    margin-left: -2px;
    margin-right: 1px;
    color: #a0a0a0;
    font-size: 7px;
  `,
  HexInput: styled.div`
    width: 43px;
    height: 15px;
    padding-left: 4px;
    display: flex;
    align-items: center;
    background: #fff;
  `,
  HexSel: styled.span`
    background: #a8c8ec;
    color: #445;
    line-height: 11px;
    letter-spacing: 0.2px;
  `,
  ButtonColumn: styled.div`
    margin-left: 7px;
    width: 66px;
    flex: none;
    display: flex;
    flex-direction: column;
  `,
  PrimaryBtn: styled.div`
    height: 15px;
    margin-top: -4px;
    display: flex;
    align-items: center;
    justify-content: center;
    border: 1.5px solid #e8e8e8;
    border-radius: 8px;
    color: #e8e8e8;
    font-size: 9px;
  `,
  SecondaryBtn: styled.div`
    height: 15px;
    margin-top: 6px;
    display: flex;
    align-items: center;
    justify-content: center;
    border: 1px solid #a0a0a0;
    border-radius: 8px;
    color: #b8b8b8;
    font-size: 9px;
  `,
  DropperSlot: styled.div`
    margin-top: 36px;
    padding-left: 2px;
    height: 14px;
  `,
  PreviewCheck: styled.label`
    margin-top: 6px;
    display: flex;
    align-items: center;
    gap: 3px;
    color: #b8b8b8;
  `,
  PreviewBox: styled.i`
    width: 10px;
    height: 10px;
    display: flex;
    align-items: center;
    justify-content: center;
    background: #b4b4b4;
    border-radius: 1px;
  `,
};
